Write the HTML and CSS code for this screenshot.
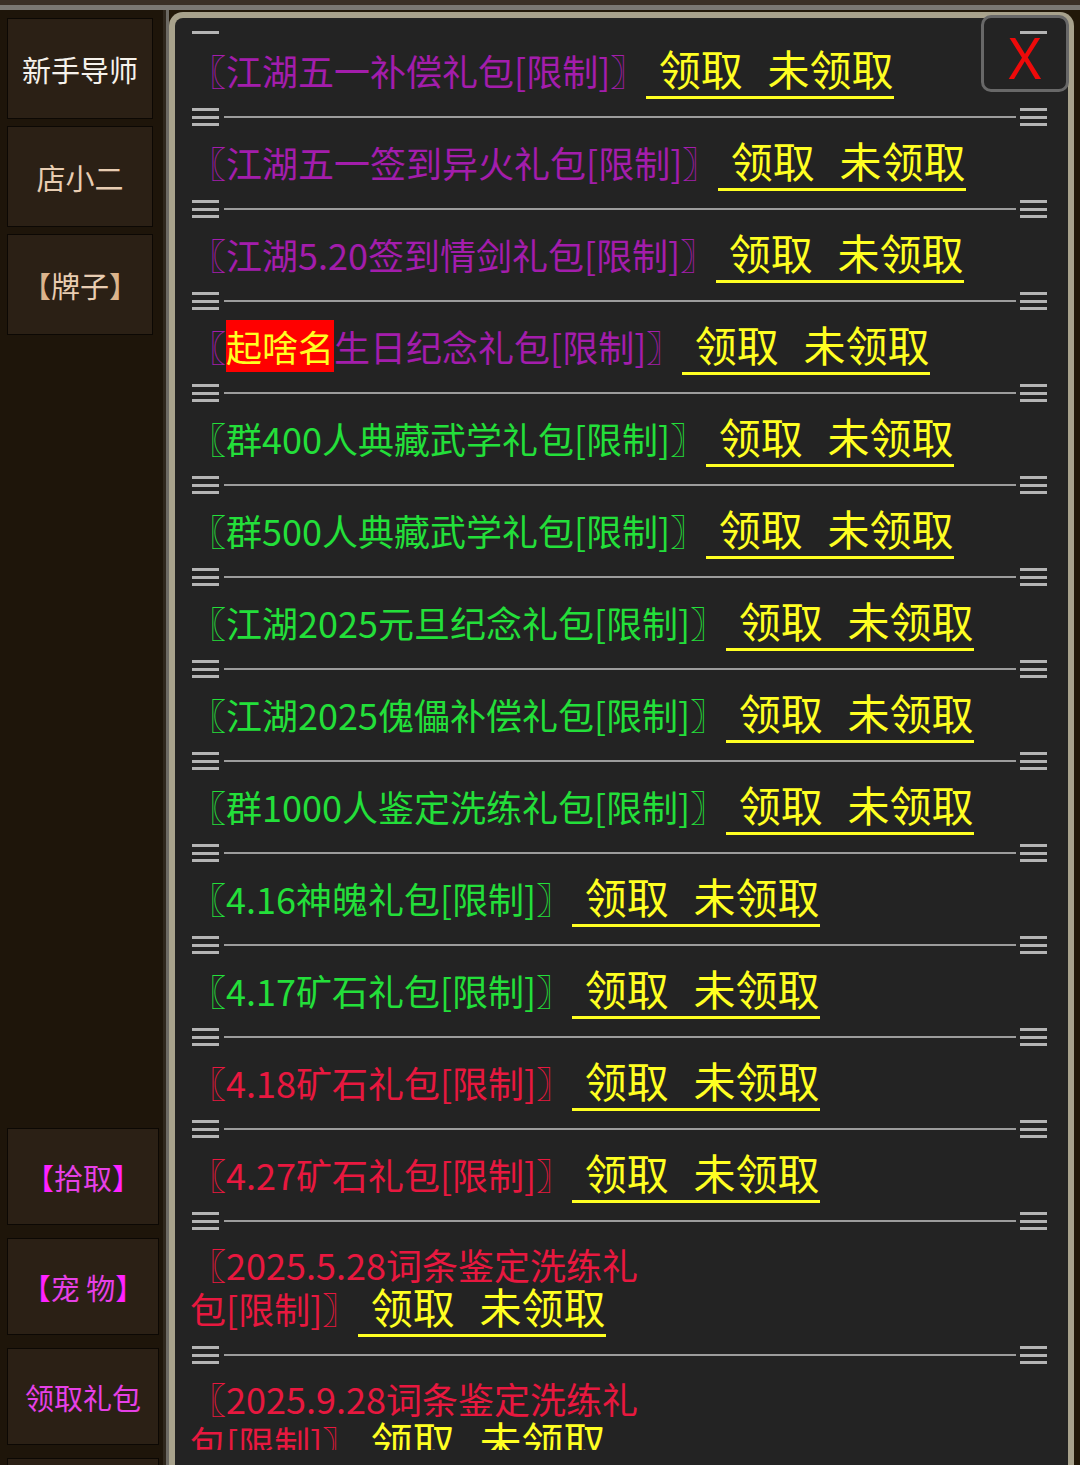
FILE: index.html
```html
<!DOCTYPE html>
<html lang="zh-CN">
<head>
    <meta charset="UTF-8">
    <meta name="viewport" content="width=device-width, initial-scale=1.0">
    <title>领取礼包</title>
    <link rel="stylesheet" href="styles.css">
</head>
<body>
    <div class="topbar"></div>
    <div class="main">
        <aside class="sidebar">
            <div class="nav">
                <div class="nav-btn white">新手导师</div>
                <div class="nav-btn">店小二</div>
                <div class="nav-btn"><span class="br">【</span>牌子<span class="br">】</span></div>
            </div>
            <div class="tools">
                <div class="tool-btn"><span class="br">【</span>拾取<span class="br">】</span></div>
                <div class="tool-btn"><span class="br">【</span>宠 物<span class="br">】</span></div>
                <div class="tool-btn">领取礼包</div>
                <div class="tool-btn"></div>
            </div>
        </aside>
        <div class="rail"></div>

        <section class="panel">
            <button class="close">X</button>
            <div class="list">
                <div class="top-mark"><i></i><i></i></div>

                <div class="item purple">〖江湖五一补偿礼包[限制]〗<span class="get"> 领取  未领取</span></div>
                <div class="sep"><span class="ham"><i></i><i></i><i></i></span><span class="rule"></span><span class="ham"><i></i><i></i><i></i></span></div>

                <div class="item purple">〖江湖五一签到异火礼包[限制]〗<span class="get"> 领取  未领取</span></div>
                <div class="sep"><span class="ham"><i></i><i></i><i></i></span><span class="rule"></span><span class="ham"><i></i><i></i><i></i></span></div>

                <div class="item purple">〖江湖5.20签到情剑礼包[限制]〗<span class="get"> 领取  未领取</span></div>
                <div class="sep"><span class="ham"><i></i><i></i><i></i></span><span class="rule"></span><span class="ham"><i></i><i></i><i></i></span></div>

                <div class="item purple">〖<span class="mark">起啥名</span>生日纪念礼包[限制]〗<span class="get"> 领取  未领取</span></div>
                <div class="sep"><span class="ham"><i></i><i></i><i></i></span><span class="rule"></span><span class="ham"><i></i><i></i><i></i></span></div>

                <div class="item green">〖群400人典藏武学礼包[限制]〗<span class="get"> 领取  未领取</span></div>
                <div class="sep"><span class="ham"><i></i><i></i><i></i></span><span class="rule"></span><span class="ham"><i></i><i></i><i></i></span></div>

                <div class="item green">〖群500人典藏武学礼包[限制]〗<span class="get"> 领取  未领取</span></div>
                <div class="sep"><span class="ham"><i></i><i></i><i></i></span><span class="rule"></span><span class="ham"><i></i><i></i><i></i></span></div>

                <div class="item green">〖江湖2025元旦纪念礼包[限制]〗<span class="get"> 领取  未领取</span></div>
                <div class="sep"><span class="ham"><i></i><i></i><i></i></span><span class="rule"></span><span class="ham"><i></i><i></i><i></i></span></div>

                <div class="item green">〖江湖2025傀儡补偿礼包[限制]〗<span class="get"> 领取  未领取</span></div>
                <div class="sep"><span class="ham"><i></i><i></i><i></i></span><span class="rule"></span><span class="ham"><i></i><i></i><i></i></span></div>

                <div class="item green">〖群1000人鉴定洗练礼包[限制]〗<span class="get"> 领取  未领取</span></div>
                <div class="sep"><span class="ham"><i></i><i></i><i></i></span><span class="rule"></span><span class="ham"><i></i><i></i><i></i></span></div>

                <div class="item green">〖4.16神魄礼包[限制]〗<span class="get"> 领取  未领取</span></div>
                <div class="sep"><span class="ham"><i></i><i></i><i></i></span><span class="rule"></span><span class="ham"><i></i><i></i><i></i></span></div>

                <div class="item green">〖4.17矿石礼包[限制]〗<span class="get"> 领取  未领取</span></div>
                <div class="sep"><span class="ham"><i></i><i></i><i></i></span><span class="rule"></span><span class="ham"><i></i><i></i><i></i></span></div>

                <div class="item red">〖4.18矿石礼包[限制]〗<span class="get"> 领取  未领取</span></div>
                <div class="sep"><span class="ham"><i></i><i></i><i></i></span><span class="rule"></span><span class="ham"><i></i><i></i><i></i></span></div>

                <div class="item red">〖4.27矿石礼包[限制]〗<span class="get"> 领取  未领取</span></div>
                <div class="sep"><span class="ham"><i></i><i></i><i></i></span><span class="rule"></span><span class="ham"><i></i><i></i><i></i></span></div>

                <div class="item red">〖2025.5.28词条鉴定洗练礼<br>包[限制]〗<span class="get"> 领取  未领取</span></div>
                <div class="sep"><span class="ham"><i></i><i></i><i></i></span><span class="rule"></span><span class="ham"><i></i><i></i><i></i></span></div>

                <div class="item red">〖2025.9.28词条鉴定洗练礼<br>包[限制]〗<span class="get"> 领取  未领取</span></div>
                <div class="sep"><span class="ham"><i></i><i></i><i></i></span><span class="rule"></span><span class="ham"><i></i><i></i><i></i></span></div>
            </div>
        </section>
    </div>
</body>
</html>
```

FILE: styles.css
```css
* {
    box-sizing: border-box;
    margin: 0;
    padding: 0;
}

html, body {
    width: 1080px;
    height: 1465px;
    overflow: hidden;
    background-color: #221809;
    font-family: "Noto Sans CJK SC", "Noto Sans", sans-serif;
}

.topbar {
    height: 10px;
    background-color: #3b3127;
    border-bottom: 5px solid #7b7974;
}

.main {
    display: flex;
    height: 1455px;
}

/* left menu */
.sidebar {
    width: 166px;
    flex: none;
    display: flex;
    flex-direction: column;
    padding: 8px 0 0 7px;
    background-color: #1e150a;
    border-right: 3px solid #2f271d;
    overflow: hidden;
}

.nav {
    display: flex;
    flex-direction: column;
    gap: 7px;
    width: 146px;
}

.tools {
    display: flex;
    flex-direction: column;
    gap: 13px;
    width: 152px;
    margin-top: auto;
    margin-bottom: -90px;
}

.nav-btn, .tool-btn {
    display: flex;
    align-items: center;
    justify-content: center;
    background-color: #2b2015;
    border: 1px solid #0c0804;
    font-size: 29px;
    white-space: pre;
}

.nav-btn {
    height: 101px;
    color: #e8cdb2;
}

.nav-btn .br {
    color: #dcb48c;
}

.nav-btn.white {
    color: #f6f2ec;
}

.tool-btn {
    height: 97px;
    color: #e640e6;
}

.tool-btn .br {
    color: #ff22ff;
}

.rail {
    width: 3px;
    flex: none;
    background-color: #6d6a64;
}

/* gift panel */
.panel {
    position: relative;
    width: 905px;
    flex: none;
    margin-top: 2px;
    background-color: #232323;
    border: 6px solid #a8a28c;
    border-bottom: none;
    border-radius: 14px 14px 0 0;
}

.close {
    position: absolute;
    top: -3px;
    right: -1px;
    width: 88px;
    height: 77px;
    display: flex;
    align-items: center;
    justify-content: center;
    padding-top: 6px;
    background: transparent;
    border: 3px solid #686868;
    border-radius: 10px;
    color: #ee0a0a;
    font-family: "Noto Sans", sans-serif;
    font-size: 56px;
    line-height: 1;
    z-index: 2;
}

.list {
    height: 1432px;
    overflow: hidden;
}

.top-mark {
    height: 16px;
    display: flex;
    align-items: flex-end;
    justify-content: space-between;
    padding: 0 21px 0 17px;
}

.top-mark i {
    width: 27px;
    height: 3px;
    background-color: #b4b4b4;
}

.item {
    padding: 13px 15px 9px 15px;
    font-size: 36px;
    line-height: 42px;
}

.purple { color: #a31dac; }
.green { color: #23df3a; }
.red { color: #e8183f; }

.mark {
    background-color: #ff0000;
    color: #ffff22;
}

.get {
    display: inline-block;
    white-space: pre;
    word-spacing: 3px;
    color: #ffff22;
    font-size: 42px;
    line-height: 42px;
    padding-bottom: 7px;
    border-bottom: 3px solid #ffff22;
}

.sep {
    height: 18px;
    display: flex;
    align-items: center;
    padding: 0 21px 0 17px;
}

.ham {
    width: 27px;
    height: 18px;
    display: flex;
    flex-direction: column;
    justify-content: space-between;
}

.ham i {
    height: 3px;
    background-color: #b4b4b4;
}

.rule {
    flex: 1;
    height: 2px;
    margin: 0 4px 0 5px;
    background-color: #9c9c9c;
}
```
